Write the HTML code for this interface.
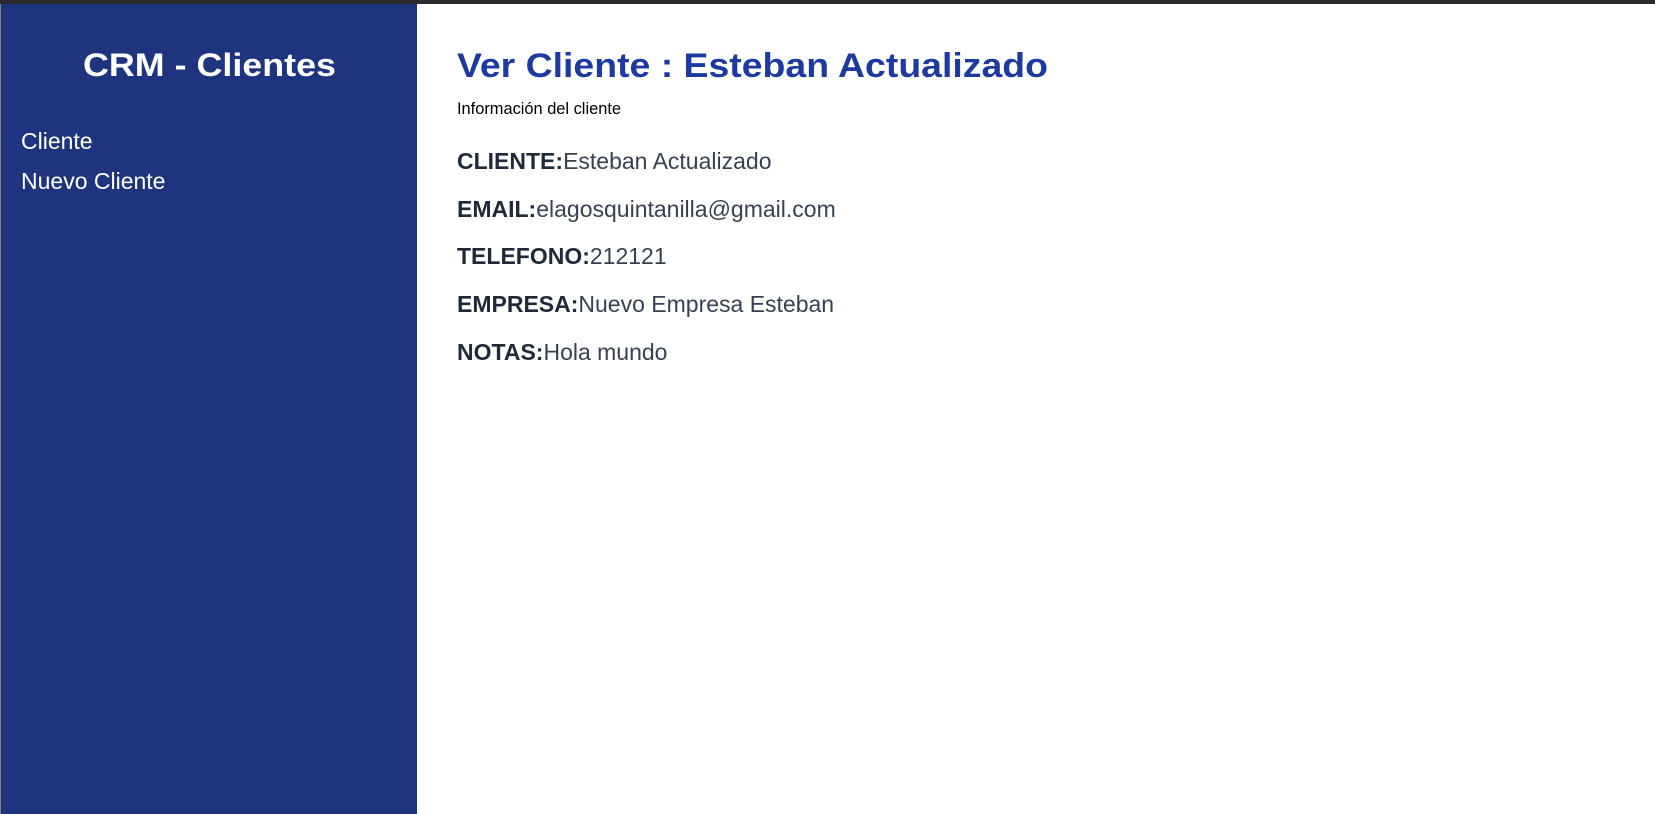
<!DOCTYPE html>
<html><head><meta charset="utf-8"><style>
*{margin:0;padding:0;box-sizing:border-box}
body{width:1655px;height:814px;overflow:hidden;background:#fff;font-family:"Liberation Sans",sans-serif;position:relative}
.top{position:absolute;left:0;top:0;width:1655px;height:4px;background:#2b2b2d}
.side{position:absolute;left:0;top:4px;width:417px;height:810px;background:#1e347e;border-left:1px solid #7a7f8a}
.side h1{position:absolute;left:0;width:417px;top:43px;text-align:center;color:#fff;font-size:32px;font-weight:900;transform:scaleX(1.12)}
.side a{position:absolute;left:20px;color:#fff;font-size:23px;text-decoration:none}
.main{position:absolute;left:457px;top:0}
.main h2{position:absolute;top:47px;left:0;white-space:nowrap;color:#1e3aa0;font-size:34px;font-weight:900;transform:scaleX(1.10);transform-origin:0 0}
.sub{position:absolute;top:100px;left:0;white-space:nowrap;font-size:16.4px;color:#000}
.f{position:absolute;left:0;white-space:nowrap;font-size:23px;color:#374151}
.f b{color:#1f2937}
</style></head><body>
<div class="top"></div>
<div class="side">
<h1>CRM - Clientes</h1>
<a style="top:124px">Cliente</a>
<a style="top:164px">Nuevo Cliente</a>
</div>
<div class="main">
<h2>Ver Cliente : Esteban Actualizado</h2>
<div class="sub">Información del cliente</div>
<div class="f" style="top:148px"><b>CLIENTE:</b>Esteban Actualizado</div>
<div class="f" style="top:196px"><b>EMAIL:</b>elagosquintanilla@gmail.com</div>
<div class="f" style="top:243px"><b>TELEFONO:</b>212121</div>
<div class="f" style="top:291px"><b>EMPRESA:</b>Nuevo Empresa Esteban</div>
<div class="f" style="top:339px"><b>NOTAS:</b>Hola mundo</div>
</div>
</body></html>
